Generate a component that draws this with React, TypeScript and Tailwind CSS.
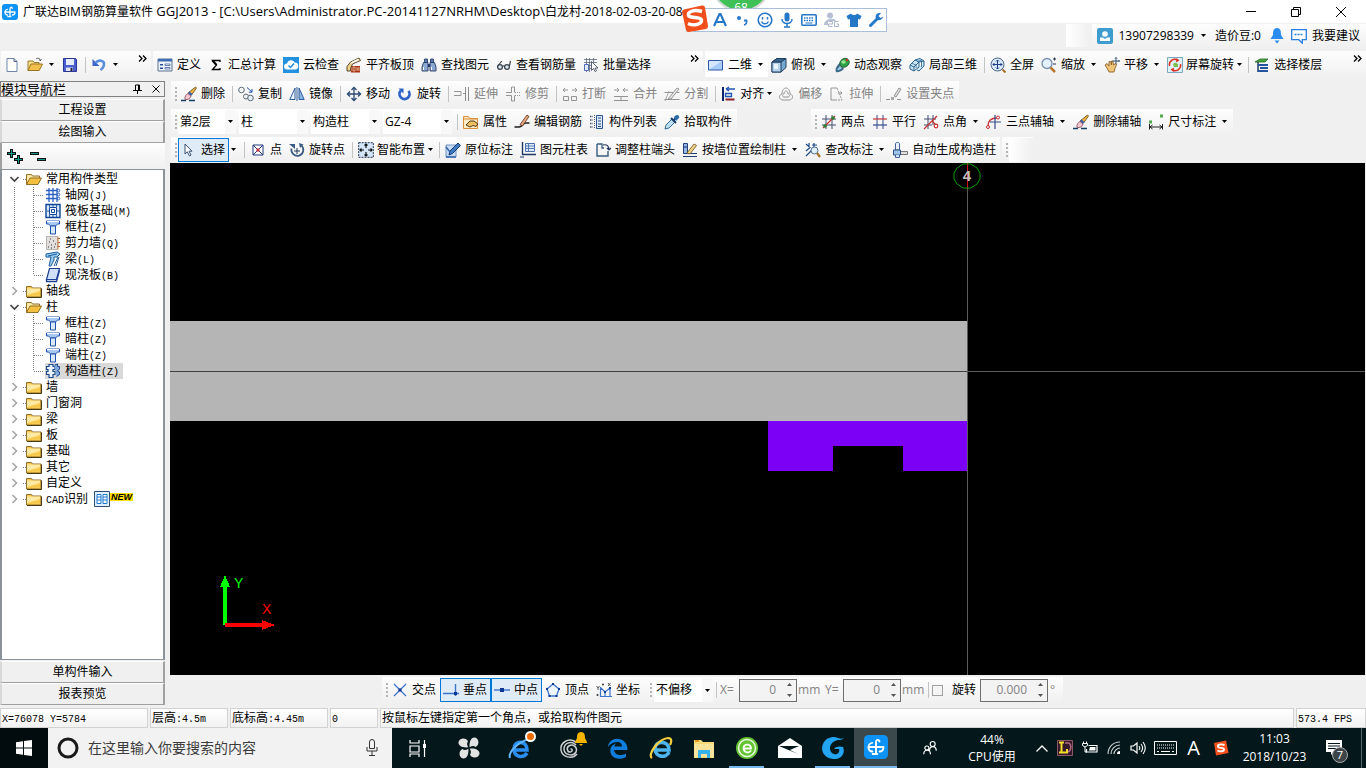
import type { ReactNode } from "react";

/* ---------- primitives ---------- */

function Svg({ children, size = 16 }: { children: ReactNode; size?: number }) {
  return (
    <svg width={size} height={size} viewBox="0 0 16 16" fill="none" className="shrink-0" aria-hidden="true">
      {children}
    </svg>
  );
}

function Caret() {
  return (
    <svg width="5" height="3" viewBox="0 0 5 3" className="shrink-0" aria-hidden="true">
      <path d="M0 0h5L2.500 3z" fill="#000" />
    </svg>
  );
}

function CaretButton({ label }: { label: string }) {
  return (
    <button type="button" aria-label={label} className="flex h-6 w-3 shrink-0 items-center pl-[2px]">
      <Caret />
    </button>
  );
}

function Sep() {
  return <span className="mr-[2px] ml-[3px] h-4 w-px shrink-0 bg-[#c3c3c3]" />;
}

function Grip() {
  return (
    <span className="mr-px flex shrink-0 flex-col gap-[2px] pl-1">
      <i className="h-[2px] w-[2px] bg-[#b4b4b4]" />
      <i className="h-[2px] w-[2px] bg-[#b4b4b4]" />
      <i className="h-[2px] w-[2px] bg-[#b4b4b4]" />
      <i className="h-[2px] w-[2px] bg-[#b4b4b4]" />
    </span>
  );
}

type ToolProps = {
  icon: ReactNode;
  text?: string;
  label?: string;
  disabled?: boolean;
  active?: boolean;
  menu?: boolean;
};

function Tool({ icon, text, label, disabled, active, menu }: ToolProps) {
  const tone = active ? "border-[#0078d7] bg-[#dfebf6]" : "border-transparent";
  return (
    <button
      type="button"
      disabled={disabled}
      aria-label={label}
      className={`flex h-6 shrink-0 items-center border pl-[2px] whitespace-nowrap ${menu ? "gap-[3px] pr-[2px]" : "gap-1 pr-[3px]"} ${tone} ${disabled ? "text-[#838383]" : "text-black"}`}
    >
      <span className={disabled ? "opacity-60 grayscale" : ""}>{icon}</span>
      {text && <span>{text}</span>}
      {menu && <Caret />}
    </button>
  );
}

function Panel({ children, className = "" }: { children?: ReactNode; className?: string }) {
  return (
    <div className={`flex h-full items-center bg-linear-to-b from-[#fdfdfd] to-[#f0f0f0] ${className}`}>{children}</div>
  );
}

function Combo({ label, value, width }: { label: string; value: string; width: string }) {
  return (
    <div className={`relative h-6 shrink-0 bg-white ${width}`}>
      <select aria-label={label} defaultValue={value} className="h-full w-full appearance-none bg-transparent pl-[2px] leading-4">
        <option>{value}</option>
      </select>
      <span className="pointer-events-none absolute inset-y-0 right-0 flex w-[11px] items-center justify-center bg-[#f8f8f8]">
        <Caret />
      </span>
    </div>
  );
}

/* ---------- icons ---------- */

const GldIcon = ({ size = 16 }: { size?: number }) => (
  <Svg size={size}>
    <rect width="16" height="16" rx="3" fill="#0c93f5" />
    <path d="M10.300 4.300C9.700 2.700 8 3 8 4.800v7.700M3 8h10M3 8c0 2 1 3 2.600 3M13 8c0 2-1 3-2.600 3M5.800 12.700h3" stroke="#fff" strokeWidth="1.300" strokeLinecap="round" />
    <path d="M5.600 5.200C3.600 5.600 3 6.800 3 8" stroke="#fff" strokeWidth="1.100" strokeLinecap="round" />
  </Svg>
);

const ic = {
  file: <Svg><path d="M3 1.500h7l3 3v10H3z" fill="#fff" stroke="#7186a5" /><path d="M10 1.500v3h3" stroke="#4a6285" /></Svg>,
  open: <Svg><path d="M1 13.500V4h5l1 1.500h5V7" fill="#f8df8e" stroke="#9b7a2b" /><path d="M1 13.500L4 7h11.500l-3.300 6.500z" fill="#f3c04d" stroke="#9b7420" /><path d="M9 2c2-1.500 4-.8 4.500 1.500m0 0l-1.500-.8m1.500.8l1-1.300" stroke="#333" strokeWidth=".8" /></Svg>,
  save: <Svg><path d="M1.500 1.500h12l1 1v12h-13z" fill="#4c5fd0" stroke="#2a3590" /><path d="M4 2h8v6H4z" fill="#e6ecfb" /><path d="M4 10.500h7V14H4z" fill="#dfe3ee" /><path d="M8.500 11h2v3h-2z" fill="#223" /></Svg>,
  undo: <Svg><path d="M1.500 2v7h7z" fill="#3d66c8" /><path d="M4.500 6c3-4 9-2.500 8.500 1.500-.2 2.300-1.500 4-3.500 5.500" stroke="#5b8fe0" strokeWidth="2.600" /></Svg>,
  define: <Svg><path d="M1 2h14v12H1z" fill="#eef3fb" stroke="#5b7290" /><path d="M1 2h14v2.500H1z" fill="#3e6db5" /><path d="M3 7h3v1.500H3zM3 10.500h3V12H3z" fill="#2c4f9b" /><path d="M8 7h5v1.500H8zM8 10.500h5V12H8z" fill="#fff" stroke="#2c4f9b" strokeWidth=".7" /></Svg>,
  sigma: <Svg><path d="M12 5V3.500H4.500L8.500 8l-4 4.500H12V11" stroke="#000" strokeWidth="1.300" /><path d="M4.500 3.500L8.500 8" stroke="#000" strokeWidth="2" /></Svg>,
  cloud: <Svg><path d="M0 0h16v16H0z" fill="#2391dd" /><path d="M4 12.500a3 3 0 010-6 4 4 0 017.500-1 3.500 3.500 0 01.5 7z" fill="#fff" /><path d="M5.500 8.500l2 2 3.500-4" stroke="#2391dd" strokeWidth="1.500" /></Svg>,
  align: <Svg><path d="M5 9h9v6.500H5z" fill="#a83418" /><path d="M5 11h9M5 13h9M8 9v2m4 0v2M8 13v2" stroke="#efc9a6" strokeWidth=".8" /><path d="M1 9.500l3.500-4.500L13 1l1.500 2.500-8 3.500-2 4.500v2.500H1z" fill="#f0d18b" stroke="#493a20" strokeWidth=".9" /><path d="M5 6l7.500-3.500" stroke="#fff" strokeWidth="1.400" /></Svg>,
  bino: <Svg><path d="M3.500 2h3v4h-3zM9.500 2h3v4h-3z" fill="#5a78a8" stroke="#213a66" strokeWidth=".8" /><path d="M2.500 5.500H7V14H1v-4zM9 5.500h4.500L15 10v4H9z" fill="#8ba8d0" stroke="#213a66" strokeWidth=".9" /><path d="M7 7h2v3H7z" fill="#213a66" /><path d="M2.500 10v3M10.500 10v3" stroke="#fff" /></Svg>,
  glasses: <Svg><circle cx="4" cy="10" r="2.400" stroke="#3d454d" strokeWidth="1.300" fill="#dbe8ef" /><circle cx="11" cy="10" r="2.400" stroke="#3d454d" strokeWidth="1.300" fill="#dbe8ef" /><path d="M6.500 9.500c.8-1 1.500-1 2 0M1.800 9l4-5M13.300 9.500L14.500 4" stroke="#3d454d" strokeWidth="1.200" /></Svg>,
  batch: <Svg><path d="M1 2.500h13M1 5.500h13M1 8.500h7M1 11.500h7M3.500 1v14M6.500 1v14M10.500 1v4" stroke="#5c6778" strokeWidth=".8" /><path d="M1.500 7.500h4v6h-4z" fill="#dfe8fa" stroke="#2c4fa8" strokeWidth=".8" /><path d="M8.500 4.500v9l2-2 1.500 3 1.500-.8-1.500-2.700h3z" fill="#fff" stroke="#4a5568" strokeWidth=".9" /></Svg>,
  plane: <Svg><path d="M.5 3.500h14v9.500H.5z" fill="#a9cbfa" stroke="#2d56a5" /><path d="M1 4h13L1 12.500z" fill="#d4e7ff" /></Svg>,
  cube: <Svg><path d="M1 5l5-3.500h9v9L10 15H1z" fill="#75a7cf" stroke="#203e5e" /><path d="M1 5h9v10H1z" fill="#b2d4ed" stroke="#203e5e" /><path d="M1 5l5-3.500h9L10 5z" fill="#3b648d" stroke="#203e5e" /><path d="M3 7h4v5H3z" fill="#e8f5fd" /></Svg>,
  orbit: <Svg><path d="M2 15c-1.500-3 1-7 4-9l4 6c-2 2-6 4-8 3z" fill="#3f6c8c" /><path d="M3 13l3-4 2 2-3 2z" fill="#a5d0e4" /><ellipse cx="10.500" cy="5.800" rx="5" ry="4.200" transform="rotate(-35 10.500 5.800)" fill="#2fa048" stroke="#1c5c2c" strokeWidth=".8" /><ellipse cx="9.500" cy="5" rx="2.300" ry="1.700" fill="#9be692" /><circle cx="13" cy="3" r="1.200" fill="#c7382a" /></Svg>,
  local3d: <Svg><path d="M1 8l5-5 4 2-5 5zM6 3l5-1.500L15 4l-5 1M1 8v4l4 2v-4M10 5v5l-5 4M15 4v5l-5 5-2-1" fill="#cbe5f6" stroke="#2c6390" /><path d="M3 6l4 2.500M8 4.500L13 3M7 7v4M12.500 5v5" stroke="#2c6390" strokeWidth=".8" /></Svg>,
  full: <Svg><circle cx="7.500" cy="7.500" r="6.500" fill="#dbeafa" stroke="#4c6488" /><path d="M7.500 3v9M3 7.500h9M6 4.500L7.500 3 9 4.500M6 10.500L7.500 12 9 10.500M4.500 6L3 7.500 4.500 9M10.500 6L12 7.500 10.500 9" stroke="#1f3f8c" /><path d="M12.500 12.500l3 3" stroke="#a87228" strokeWidth="2" /></Svg>,
  zoom: <Svg><circle cx="6" cy="6.500" r="5" fill="#e4f0fb" stroke="#7892b0" strokeWidth="1.300" /><path d="M9.500 10.500l4.500 4.500" stroke="#b5782c" strokeWidth="2.500" /><path d="M12 2h3M13.500.500v3M12 7h3" stroke="#203050" /></Svg>,
  pan: <Svg><path d="M1 8l2-1.500L5 9V4.500h1.500L7.500 8V4h1.500l.5 4 2-1.500 1 1-1.500 4-1 3.500H5L3.500 12z" fill="#eec478" stroke="#8a6429" strokeWidth=".9" /><path d="M12 .5v7M8.500 4h7M11 1.500l1-1 1 1M14.500 3l1 1-1 1" stroke="#253f66" strokeWidth=".9" /></Svg>,
  screenrot: <Svg><path d="M.5.500h15v15H.500z" fill="#e1f1f8" stroke="#7ba9c2" /><path d="M2.500 9a5.500 5.500 0 018-6M13.500 7a5.500 5.500 0 01-8 6" stroke="#dd3325" strokeWidth="1.500" /><path d="M9.500 1L12.500 3.500l-3.500 2zM6.500 15L3.500 12.500l3.500-2z" fill="#dd3325" /><path d="M6 7l2-1.500L11 7v3H7z" fill="#7ebd51" /></Svg>,
  floors: <Svg><path d="M1 5l5-3h8l-3 3z" fill="#48a838" stroke="#226b28" strokeWidth=".8" /><path d="M4 5v10" stroke="#203b68" strokeWidth="1.500" /><path d="M4 8h10M6 11h8M4 14h10" stroke="#24549e" strokeWidth="1.800" /></Svg>,
  eraser: <Svg><path d="M0 14.500h5M8 14.500h6" stroke="#163d63" strokeWidth="1.400" /><path d="M14.500 1l1 1-5 7L7 7z" fill="#f1b842" stroke="#5f4116" strokeWidth=".8" /><path d="M8.500 5.500l3 2.500-1.500 2-3-2.500z" fill="#3c62b3" /><path d="M7 7.500l3 2.500c-1 3-3 4-6 3.500-.5-3 1-5 3-6z" fill="#f4c8d0" stroke="#7c4457" strokeWidth=".8" /></Svg>,
  copy: <Svg><circle cx="3.500" cy="4" r="2.800" stroke="#5c6a78" /><circle cx="8" cy="10.500" r="2.500" stroke="#5c6a78" /><circle cx="12.500" cy="12" r="2.800" stroke="#5c6a78" fill="#e6eff8" /><path d="M9 1.500l5 4.500m0-3v3.200h-3.200" stroke="#2453a8" /></Svg>,
  mirror: <Svg><path d="M6 2v11.500H.8z" fill="#e8f1fb" stroke="#2d5d9c" /><path d="M10 2v11.500h5.200z" fill="#8bb5e5" stroke="#2d5d9c" /><path d="M8 1v14" stroke="#2d5d9c" /></Svg>,
  move: <Svg><path d="M8 1.500v13M1.500 8h13" stroke="#2b4a74" strokeWidth="1.300" /><path d="M5.500 4L8 1.500 10.500 4M5.500 12L8 14.500 10.500 12M4 5.500L1.500 8 4 10.500M12 5.500L14.500 8 12 10.500" stroke="#2b4a74" strokeWidth="1.400" /></Svg>,
  rotate: <Svg><path d="M4 4.500a5 5 0 107.500.5" stroke="#3063c8" strokeWidth="2.800" /><path d="M1.500 2.500h5v5z" fill="#3063c8" /></Svg>,
  extend: <Svg><path d="M0 5.500h7v4H0" stroke="#555" /><path d="M9 7.500h2" stroke="#555" /><path d="M11.500 1v14M14.500 1v14" stroke="#444" /></Svg>,
  trim: <Svg><path d="M6.500 1h3v5.500M6.500 1v5.500H1M6.500 15V9.500H1M6.500 15h3V9.500" stroke="#555" /><path d="M10 6.500h6M10 9.500h6" stroke="#555" strokeDasharray="1 1" /></Svg>,
  brk: <Svg><path d="M1.500 14.500v-4h5v4zM9.500 14.500v-4h5v4zM1 4h5M3 2L1 4l2 2M15 4h-5m3-2l2 2-2 2" stroke="#555" /></Svg>,
  merge: <Svg><path d="M1 10.500h14M1 14.500h14M1 4h5M4 2l2 2-2 2M15 4h-5m2-2l-2 2 2 2M8 10v4" stroke="#555" /></Svg>,
  split: <Svg><path d="M.5 6.500h15M.5 13.500h15" stroke="#555" /><path d="M4 13L13 2l2 1-8 10z" fill="#ddd" stroke="#555" /><path d="M1 15l4-10" stroke="#555" strokeWidth=".8" /></Svg>,
  alignl: <Svg><path d="M2 1v14" stroke="#10256d" strokeWidth="2" /><path d="M5 3h9M5 3l3-2M5 3l3 2" stroke="#2154b5" strokeWidth="1.400" /><path d="M4.500 7.500h6v3h-6z" stroke="#2154b5" strokeWidth="1.300" /><path d="M4.500 13.500h9" stroke="#8c1f23" strokeWidth="2" /></Svg>,
  offset: <Svg><path d="M4 8c0-8 8-8 8 0 4 1 3 6-1 6H5C1 14 0 9 4 8z" stroke="#555" /><path d="M6 8c0-4 4-4 4 0 2 .5 2 3 0 3H6C4 11 4 8.500 6 8z" stroke="#555" /></Svg>,
  stretch: <Svg><path d="M8 2H2v12h5" stroke="#555" /><path d="M8 2l5 12H7" stroke="#555" strokeDasharray="2 1" /><path d="M9 7h4m-1.500-1.500L13 7l-1.500 1.500" stroke="#555" /></Svg>,
  clamp: <Svg><path d="M0 13.500h4M11 13.500h4" stroke="#555" /><path d="M5 14v-3h3v3z" fill="#777" /><path d="M8 10l5-8 2 1-5 8z" fill="#ccc" stroke="#555" /></Svg>,
  props: <Svg><path d="M.5 14.500v-12h5l1 2h8v10z" fill="#fdecc6" stroke="#d98f3a" /><path d="M.5 5h14" stroke="#d98f3a" /><path d="M3 11l4-4h4l4 3-2 2.500-3-1-3 1.500z" fill="#f0c060" stroke="#382c18" strokeWidth=".9" /></Svg>,
  editbar: <Svg><path d="M.5 13h4.500c3 0 4-4 6.500-4h4" stroke="#1b1b1b" strokeWidth="1.500" /><path d="M6 10.500L13 1l2 1.500L8.500 12z" fill="#e8a87a" stroke="#5e2f21" strokeWidth=".8" /></Svg>,
  list: <Svg><path d="M1 2.500h3M1 6h3M1 9.500h3M1 13h3" stroke="#44566d" strokeWidth="1.300" strokeDasharray="1.500 1" /><path d="M7.500 1.500h6v13h-6z" fill="#dbe9fa" stroke="#2c528f" /><path d="M9 4h3M9 7h3M9 10h3M9 12.500h3" stroke="#2c528f" /><path d="M5.500 1v14" stroke="#44566d" strokeDasharray="1 1" /></Svg>,
  pick: <Svg><path d="M1 15l1-4 6-6 3 3-6 6z" fill="#bfe3f5" stroke="#2f6a9a" /><path d="M7 4l5 5M10 6l3-4" stroke="#15406d" strokeWidth="2" /><path d="M10 3.500C12-.5 16 1 15 4l-3 3z" fill="#2a6cab" /></Svg>,
  twopt: <Svg><path d="M5 1v14M11 1v14M1 5h14M1 11h14" stroke="#41506e" /><path d="M2 14L14 2" stroke="#c73131" strokeWidth="1.200" /><circle cx="4" cy="12" r="1.800" fill="#2c8130" /><circle cx="12" cy="4" r="1.800" fill="#2c8130" /></Svg>,
  parallel: <Svg><path d="M5 1v14M11 1v14" stroke="#344b8c" /><path d="M1 5h14" stroke="#c73131" strokeWidth="1.200" /><path d="M1 11h14" stroke="#344b8c" strokeWidth="1.200" /></Svg>,
  ptangle: <Svg><path d="M5 1v14M10 1v10M1 5h12M1 11h8" stroke="#41506e" /><path d="M1 15L14 2M9 7l5 5" stroke="#c73131" strokeWidth="1.200" /><circle cx="13" cy="12" r="1.800" fill="#fff" stroke="#c73131" strokeWidth="1.200" /></Svg>,
  threept: <Svg><path d="M2 12c0-5 3-8 9-8" stroke="#c73131" strokeWidth="1.300" /><path d="M9 1v14M4 8h11" stroke="#344b8c" strokeWidth="1.200" /><circle cx="2" cy="13" r="1.500" stroke="#c73131" /><circle cx="12" cy="3.500" r="1.500" fill="#fff" stroke="#c73131" /></Svg>,
  dim: <Svg><path d="M1.500 10v5.500M14.500 10v5.500M2 13h12M4.500 11L2 13l2.500 2M11.500 11l2.500 2-2.500 2" stroke="#222" /><path d="M1 6.500h3v3H1zM12 .500h3v3h-3z" fill="#4eac4c" /></Svg>,
  pointer: <Svg><path d="M4 2v10l2.300-2.200L8.500 14l1.500-1-2-3.800h3z" fill="#fff" stroke="#3a5173" /></Svg>,
  point: <Svg><path d="M3 3h10v10H3z" fill="#fff" stroke="#233a80" /><path d="M3 3l10 10M13 3L3 13" stroke="#233a80" /><path d="M6.500 6.500h3v3h-3z" fill="#c82f38" /></Svg>,
  rotpt: <Svg><path d="M2.500 6.500a6 6 0 1010-3" stroke="#3a5b82" strokeWidth="1.700" /><path d="M0 2h6v5z" fill="#3a5b82" /><path d="M8 6v6M5 9h6" stroke="#1d3352" /><path d="M10 1l4.500 1.500L11 6z" fill="#3a5b82" /></Svg>,
  smart: <Svg><path d="M.7.700h14.600v14.600H.700z" fill="#d5e6f9" stroke="#27364c" strokeDasharray="2 1" /><path d="M8 1.500v4.500M8 10v4.500M1.500 8H6M10 8h4.500M6.500 3.500L8 2l1.500 1.500M6.500 12.500L8 14l1.500-1.500M3.500 6.500L2 8l1.500 1.500M12.500 6.500L14 8l-1.500 1.500" stroke="#111" strokeWidth="1.200" /></Svg>,
  annotate: <Svg><path d="M1 3h10v12H1z" fill="#c7daf3" stroke="#7193c4" /><path d="M4 13l1-4 8-8 2.500 2.500-8 8z" fill="#3f7bc2" stroke="#173b72" /><path d="M1 15h10M1 5l4 5" stroke="#3162a8" strokeWidth="1.300" /></Svg>,
  coltable: <Svg><path d="M2.500 0v12.500H16" stroke="#1f3763" strokeWidth="1.400" /><path d="M5.500 1.500h9v8h-9z" fill="#dfeafb" stroke="#4a6fb0" /><path d="M5.500 4h9M5.500 6.500h9M8.500 1.500v8" stroke="#4a6fb0" strokeWidth=".9" /><path d="M0 15h4" stroke="#1f3763" /></Svg>,
  colend: <Svg><path d="M2 2v12h11V9" stroke="#3a5b82" strokeWidth="1.400" /><path d="M2 2h5v4h2" stroke="#3a5b82" strokeWidth="1.300" /><path d="M8 3c4-1 6 1 6 5m0 0l-2-2m2 2l2-2" stroke="#23355d" strokeWidth="1.200" /></Svg>,
  wallcol: <Svg><path d="M1.500 1.500h4v10h-4z" fill="#97b7e8" stroke="#203d78" /><path d="M1 14.500h14M6 11.500h9M2 5h3" stroke="#203d78" strokeWidth="1.200" /><path d="M5 11L12 2l2.500 1.500L8 12z" fill="#f0d688" stroke="#6c4b17" strokeWidth=".8" /></Svg>,
  check: <Svg><path d="M1 2l4 3.500L1 9M1 14l6-6M4 1v4M9 1v4M7 3h5" stroke="#1e4b8a" strokeWidth="1.200" /><circle cx="9.500" cy="8.500" r="3.500" fill="#dff0fb" stroke="#516f92" /><path d="M12 11l3 4" stroke="#a7732b" strokeWidth="2.200" /></Svg>,
  autocol: <Svg><path d="M3.500 1.500c0-1.500 4-1.500 4 0V8h-4z" fill="#eaf3fd" stroke="#3f6499" /><path d="M8 9.500h7.500v3H8z" fill="#ddd" stroke="#777" /><path d="M1.500 8h7v5h-7z" fill="#9fc4ec" stroke="#2d4f87" /><path d="M3.500 13v2.500h4V13" fill="#d5e6f9" stroke="#3f6499" /></Svg>,
  cross: <Svg><path d="M2 2l12 12M14 2L2 14" stroke="#3c74cc" strokeWidth="1.300" /><path d="M6.500 6.500h3v3h-3z" fill="#0f3794" /></Svg>,
  perp: <Svg><path d="M0 11.500h16M12.500 2v12" stroke="#3c74cc" strokeWidth="1.400" /><path d="M11 10h3v3h-3z" fill="#0f3794" /></Svg>,
  mid: <Svg><path d="M0 8h16" stroke="#3c74cc" strokeWidth="1.400" /><path d="M6 6h4v4H6z" fill="#0f3794" /></Svg>,
  vertex: <Svg><path d="M8 2l6 5-2.500 7h-7L2 7z" fill="#eef5fd" stroke="#3c74cc" strokeWidth="1.300" /><path d="M7 1h2v2H7zM1 6h2v2H1zM13 6h2v2h-2zM3.500 13h2v2h-2zM10.500 13h2v2h-2z" fill="#0f3794" /></Svg>,
  coord: <Svg><path d="M4.500 5v10M4 14.500h12M5 6l4 4 5-4M9 10v4M14 6v8" stroke="#3c74cc" strokeWidth="1.200" /><path d="M.5 4l1.500 2 1.500-2M2 6v2M12 1l2.500 3M14.500 1L12 4" stroke="#333" strokeWidth=".8" /><circle cx="7" cy="2.500" r="1" fill="#333" /><circle cx="1.500" cy="13" r="1" fill="#333" /><path d="M8 9h2v2H8zM13 5h2v2h-2z" fill="#0f3794" /></Svg>,
};

/* ---------- tree icons ---------- */

const ti = {
  folder: <Svg><path d="M.5 3.500h5l1 1.500h8.500v9H.500z" fill="#f7c94f" stroke="#8f6e28" /><path d="M1 5.500h13V8L1 12z" fill="#fde9a4" /><path d="M15.500 5.500v9H1" stroke="#4b3a17" /></Svg>,
  folderOpen: <Svg><path d="M.5 13.500v-10h5l1 1.500h7v3" fill="#fdeaa6" stroke="#8f6e28" /><path d="M.5 13.500L4 7h11.500L12 13.500z" fill="#f5bf40" stroke="#8f6e28" /></Svg>,
  grid: <Svg><path d="M4 1v14M8 1v14M12 1v14M1 3.500h11M1 7.500h11M1 11.500h11" stroke="#2c62c4" strokeWidth="1.300" /><circle cx="13.500" cy="3.500" r="1.300" stroke="#2c62c4" /><circle cx="13.500" cy="7.500" r="1.300" stroke="#2c62c4" /><circle cx="13.500" cy="11.500" r="1.300" stroke="#2c62c4" /></Svg>,
  raft: <Svg><path d="M1 1.500h14v13H1z" fill="#d9e9fb" stroke="#0f4596" strokeWidth="1.400" /><path d="M4.500 4.500h7v7h-7z" fill="#fff" stroke="#0f4596" /><path d="M6.500 6.500h3v3h-3z" stroke="#0f4596" /><path d="M8 2v2M8 12v2M2 8h2M12 8h2M4.500 2v2M11.500 2v2M4.500 12v2M11.500 12v2" stroke="#0f4596" strokeWidth=".8" /></Svg>,
  column: <Svg><path d="M1.500 2h13v3h-2l-2 2h-5l-2-2h-2z" fill="#a9c8f5" stroke="#1d52ae" /><path d="M5.500 7h5v8h-5z" fill="#dce9fb" stroke="#1d52ae" /><path d="M2 2.500h12" stroke="#fff" /></Svg>,
  shear: <Svg><path d="M1.500 1.500h11v13h-11z" fill="#e2dedb" stroke="#b9b4b0" /><path d="M3 12h1M6 10h1M4 7h1M9 12h1M8 6h1M6 13h1M10 9h1M5 4h1" stroke="#333" /><path d="M13 3h2v1h-2zM13 7h2v1h-2zM13 11h2v1h-2z" fill="#bb5a24" /><path d="M13 1.500v13" stroke="#cf7a3c" /></Svg>,
  beam: <Svg><path d="M1 3l11-2 3 2-3 3H9v3l-3 6H4L6 6H1z" fill="#9bcdf0" stroke="#1c5a9c" /><path d="M3 5l9-2M9 15l4-9M11 15l3-9" stroke="#1c5a9c" /></Svg>,
  slab: <Svg><path d="M4.500 1.500h10l-3 11h-10z" fill="#cfe0fa" stroke="#1d3f94" strokeWidth="1.200" /><path d="M1.500 12.500v2h10l3-11" stroke="#1d3f94" strokeWidth="1.300" /></Svg>,
  struct: <Svg><path d="M4 1.500h4v2h2v3H8v2h2v3H8v3H4v-3H1.500v-3H3v-2H1.500v-3H4z" fill="#e9f2fd" stroke="#1d4b8e" strokeWidth="1.200" /><path d="M9.500 2l3-1v2.500h2V6l-2 2 2 1v2.500l-3 2" stroke="#1d4b8e" fill="#7da9de" /></Svg>,
  cad: <Svg><path d="M.5.500h15v15H.500z" fill="#dff0fc" stroke="#2e4e76" /><path d="M3 3.500h4v9H3zM9 3.500h4v9H9z" fill="#fff" stroke="#1d7bd0" /><path d="M3 6h4M3 9h4M9 6h4M9 9h4" stroke="#1d7bd0" /></Svg>,
};

/* ---------- module tree ---------- */

type Leaf = { name: string; key: string; icon: ReactNode; selected?: boolean };
type Group = { name: string; latin?: string; children?: Leaf[]; isNew?: boolean };

const groups: Group[] = [
  {
    name: "常用构件类型",
    children: [
      { name: "轴网", key: "(J)", icon: ti.grid },
      { name: "筏板基础", key: "(M)", icon: ti.raft },
      { name: "框柱", key: "(Z)", icon: ti.column },
      { name: "剪力墙", key: "(Q)", icon: ti.shear },
      { name: "梁", key: "(L)", icon: ti.beam },
      { name: "现浇板", key: "(B)", icon: ti.slab },
    ],
  },
  { name: "轴线" },
  {
    name: "柱",
    children: [
      { name: "框柱", key: "(Z)", icon: ti.column },
      { name: "暗柱", key: "(Z)", icon: ti.column },
      { name: "端柱", key: "(Z)", icon: ti.column },
      { name: "构造柱", key: "(Z)", icon: ti.struct, selected: true },
    ],
  },
  { name: "墙" },
  { name: "门窗洞" },
  { name: "梁" },
  { name: "板" },
  { name: "基础" },
  { name: "其它" },
  { name: "自定义" },
  { name: "识别", latin: "CAD", isNew: true },
];

function Mono({ children }: { children: ReactNode }) {
  return (
    <span className="font-['Liberation_Mono','Noto_Sans_CJK_SC',monospace] text-[10px] leading-none">{children}</span>
  );
}

function Tree() {
  return (
    <ul className="pt-px">
      {groups.map((g) => (
        <li key={g.name + (g.latin ?? "")}>
          <button type="button" className="flex h-4 items-center">
            <svg width="24" height="16" viewBox="0 0 24 16" fill="none" aria-hidden="true" className="shrink-0">
              {g.children ? (
                <path d="M8.500 6l4 4 4-4" stroke="#404040" strokeWidth="1.600" />
              ) : (
                <path d="M10.500 4l4 4-4 4" stroke="#a6a6a6" strokeWidth="1.600" />
              )}
              <path d="M21 8.500h3" stroke="#808080" strokeDasharray="1 1" />
            </svg>
            {g.children ? ti.folderOpen : ti.folder}
            <span className="ml-1 leading-4">
              {g.latin && <Mono>{g.latin}</Mono>}
              {g.name}
            </span>
            {g.isNew && (
              <>
                <span className="ml-[6px] flex">{ti.cad}</span>
                <span className="mb-[5px] bg-[#ffe000] px-px font-['Liberation_Sans',sans-serif] text-[9px] leading-[8px] font-bold italic">
                  NEW
                </span>
              </>
            )}
          </button>
          {g.children && (
            <ul>
              {g.children.map((c, i) => (
                <li key={c.name}>
                  <button type="button" className="flex h-4 items-center">
                    <svg width="43" height="16" viewBox="0 0 43 16" fill="none" aria-hidden="true" className="shrink-0">
                      <path
                        d={`M12.500 0v16M31.500 0v${i === g.children!.length - 1 ? 8 : 16}M32 8.500h10`}
                        stroke="#808080"
                        strokeDasharray="1 1"
                      />
                    </svg>
                    <span className={`flex h-4 items-center pr-1 ${c.selected ? "bg-[#d9d9d9]" : ""}`}>
                      {c.icon}
                      <span className="ml-1 leading-4">
                        {c.name}
                        <Mono>{c.key}</Mono>
                      </span>
                    </span>
                  </button>
                </li>
              ))}
            </ul>
          )}
        </li>
      ))}
    </ul>
  );
}

function NavButton({ children }: { children: ReactNode }) {
  return (
    <button
      type="button"
      className="h-[22px] shrink-0 border-t border-r-2 border-b border-l-2 border-t-white border-r-[#a0a0a0] border-b-[#a0a0a0] border-l-[#d8d8d8] bg-[#f0f0f0] leading-4"
    >
      {children}
    </button>
  );
}

function Sidebar() {
  return (
    <aside className="flex w-[165px] shrink-0 flex-col pt-[3px] pb-[3px]">
      <header className="mb-[2px] flex h-4 shrink-0 items-center border border-[#808080]">
        <h2 className="flex-1 text-[13px] leading-[14px]">模块导航栏</h2>
        <button type="button" aria-label="固定" className="mr-[10px]">
          <svg width="9" height="10" viewBox="0 0 9 10" fill="none" aria-hidden="true">
            <path d="M2.500 1h4v5M2.500 1v5M0 6.500h9M4.500 6.500V10M5.500 1v5" stroke="#000" />
          </svg>
        </button>
        <button type="button" aria-label="关闭" className="mr-1">
          <svg width="8" height="8" viewBox="0 0 8 8" fill="none" aria-hidden="true">
            <path d="M.5.500l7 7M7.500.500l-7 7" stroke="#000" />
          </svg>
        </button>
      </header>
      <NavButton>工程设置</NavButton>
      <NavButton>绘图输入</NavButton>
      <div className="flex h-[26px] shrink-0 items-center gap-[7px] border-l-2 border-[#a0a0a0] bg-linear-to-b from-[#fdfdfd] to-[#f0f0f0] pl-[5px]">
        <button type="button" aria-label="全部展开">
          <svg width="16" height="15" viewBox="0 0 16 15" fill="none" aria-hidden="true">
            <path d="M4.500 0v9M0 4.500h9M11.500 6v9M7 10.500h9" stroke="#111" strokeWidth="3" />
            <path d="M4.500 1v7M1 4.500h7M11.500 7v7M8 10.500h7" stroke="#11998b" />
          </svg>
        </button>
        <button type="button" aria-label="全部折叠">
          <svg width="16" height="15" viewBox="0 0 16 15" fill="none" aria-hidden="true">
            <path d="M0 4.500h9M7 10.500h9" stroke="#111" strokeWidth="3" />
            <path d="M1 4.500h7M8 10.500h7" stroke="#11998b" />
          </svg>
        </button>
      </div>
      <nav className="mb-px min-h-0 flex-1 overflow-hidden border-2 border-t border-b border-[#8c9299] bg-white">
        <Tree />
      </nav>
      <NavButton>单构件输入</NavButton>
      <NavButton>报表预览</NavButton>
    </aside>
  );
}

/* ---------- toolbars ---------- */

function Overflow() {
  return (
    <button type="button" aria-label="更多" className="mt-1 mr-1 ml-auto self-start">
      <svg width="9" height="7" viewBox="0 0 9 7" fill="none" className="block" aria-hidden="true">
        <path d="M1 .500l3 3-3 3M5 .500l3 3-3 3" stroke="#000" strokeWidth="1.300" />
      </svg>
    </button>
  );
}

function MainToolbar() {
  return (
    <div className="flex h-[27px] shrink-0 gap-[2px] pl-px">
      <Panel className="w-[150px] shrink-0">
        <Tool icon={ic.file} label="新建" />
        <Tool icon={ic.open} label="打开" />
        <CaretButton label="打开选项" />
        <Tool icon={ic.save} label="保存" />
        <Sep />
        <Tool icon={ic.undo} label="撤销" />
        <CaretButton label="撤销选项" />
        <Overflow />
      </Panel>
      <Panel className="w-[550px] shrink-0 pl-px">
        <Tool icon={ic.define} text="定义" />
        <Tool icon={ic.sigma} text="汇总计算" />
        <Tool icon={ic.cloud} text="云检查" />
        <Tool icon={ic.align} text="平齐板顶" />
        <Tool icon={ic.bino} text="查找图元" />
        <Tool icon={ic.glasses} text="查看钢筋量" />
        <Tool icon={ic.batch} text="批量选择" />
        <Overflow />
      </Panel>
      <Panel className="min-w-0 flex-1">
        <div className="flex bg-white">
          <Tool icon={ic.plane} text="二维" />
          <CaretButton label="二维选项" />
        </div>
        <Tool icon={ic.cube} text="俯视" />
        <CaretButton label="俯视选项" />
        <Tool icon={ic.orbit} text="动态观察" />
        <Tool icon={ic.local3d} text="局部三维" />
        <Sep />
        <Tool icon={ic.full} text="全屏" />
        <Tool icon={ic.zoom} text="缩放" />
        <CaretButton label="缩放选项" />
        <Tool icon={ic.pan} text="平移" />
        <CaretButton label="平移选项" />
        <Tool icon={ic.screenrot} text="屏幕旋转" menu />
        <Sep />
        <Tool icon={ic.floors} text="选择楼层" />
        <Overflow />
      </Panel>
    </div>
  );
}

function EditToolbars() {
  return (
    <div className="flex shrink-0 flex-col gap-[3px] pt-[3px] pb-px pl-px">
      <div className="flex h-[25px]">
        <Panel className="pr-px">
          <Grip />
          <Tool icon={ic.eraser} text="删除" />
          <Sep />
          <Tool icon={ic.copy} text="复制" />
          <Tool icon={ic.mirror} text="镜像" />
          <Sep />
          <Tool icon={ic.move} text="移动" />
          <Tool icon={ic.rotate} text="旋转" />
          <Sep />
          <Tool icon={ic.extend} text="延伸" disabled />
          <Tool icon={ic.trim} text="修剪" disabled />
          <Sep />
          <Tool icon={ic.brk} text="打断" disabled />
          <Tool icon={ic.merge} text="合并" disabled />
          <Tool icon={ic.split} text="分割" disabled />
          <Sep />
          <Tool icon={ic.alignl} text="对齐" menu />
          <Tool icon={ic.offset} text="偏移" disabled />
          <Tool icon={ic.stretch} text="拉伸" disabled />
          <Sep />
          <Tool icon={ic.clamp} text="设置夹点" disabled />
        </Panel>
      </div>
      <div className="flex h-[25px]">
        <Panel className="pr-px">
          <Grip />
          <div className="flex gap-[3px] pr-[2px]">
            <Combo label="楼层" value="第2层" width="w-[58px]" />
            <Combo label="构件大类" value="柱" width="w-[69px]" />
            <Combo label="构件类型" value="构造柱" width="w-[69px]" />
            <Combo label="构件名称" value="GZ-4" width="w-[69px]" />
          </div>
          <Sep />
          <Tool icon={ic.props} text="属性" />
          <Tool icon={ic.editbar} text="编辑钢筋" />
          <Tool icon={ic.list} text="构件列表" />
          <Tool icon={ic.pick} text="拾取构件" />
        </Panel>
        <Panel className="ml-[74px] pr-px">
          <Grip />
          <Tool icon={ic.twopt} text="两点" />
          <Tool icon={ic.parallel} text="平行" />
          <Tool icon={ic.ptangle} text="点角" />
          <CaretButton label="点角选项" />
          <Tool icon={ic.threept} text="三点辅轴" />
          <CaretButton label="三点辅轴选项" />
          <Tool icon={ic.eraser} text="删除辅轴" />
          <Tool icon={ic.dim} text="尺寸标注" />
          <CaretButton label="尺寸标注选项" />
        </Panel>
      </div>
      <div className="flex h-[25px] gap-[2px]">
        <Panel>
          <Grip />
          <Tool icon={ic.pointer} text="选择" active />
          <CaretButton label="选择选项" />
          <Sep />
          <Tool icon={ic.point} text="点" />
          <Tool icon={ic.rotpt} text="旋转点" />
          <Sep />
          <Tool icon={ic.smart} text="智能布置" menu />
          <Sep />
          <Tool icon={ic.annotate} text="原位标注" />
          <Tool icon={ic.coltable} text="图元柱表" />
          <Tool icon={ic.colend} text="调整柱端头" />
          <Tool icon={ic.wallcol} text="按墙位置绘制柱" />
          <CaretButton label="绘制柱选项" />
          <Tool icon={ic.check} text="查改标注" />
          <CaretButton label="查改标注选项" />
          <Tool icon={ic.autocol} text="自动生成构造柱" />
        </Panel>
        <Panel>
          <Grip />
          <span className="h-6 w-6 bg-linear-to-r from-white to-[#f0f0f0]" />
        </Panel>
      </div>
    </div>
  );
}

/* ---------- drawing area ---------- */

function Canvas() {
  return (
    <div className="min-h-0 flex-1 overflow-hidden bg-black">
      <svg className="h-full w-full" viewBox="0 0 1195 512" preserveAspectRatio="xMinYMin meet" shapeRendering="crispEdges" role="img" aria-label="绘图区">
        <path d="M0 158h797v100H0z" fill="#b5b5b5" />
        <path d="M598 258h199v50h-64v-25h-70v25h-65z" fill="#7b00f5" />
        <path d="M0 208.500h797" stroke="#404040" />
        <path d="M797 208.500h398" stroke="#5a5a5a" />
        <path d="M797.500 25v487" stroke="#5a5a5a" />
        <path d="M797.500 0v25" stroke="#d01010" />
        <path d="M793 1h8l6 4 3 5v6l-3 5-6 4h-8l-6-4-3-5v-6l3-5z" fill="none" stroke="#00a000" shapeRendering="auto" />
        <text x="797" y="18" textAnchor="middle" fontFamily="Liberation Sans, sans-serif" fontSize="15" fontWeight="bold" fill="#c0c0c0">4</text>
        <path d="M53 462h4v-43h-4z" fill="#00ff00" />
        <path d="M55 412l5 12H50z" fill="#00ff00" />
        <path d="M55 460h38v4H55z" fill="#ff0000" />
        <path d="M92 457l13 5-13 5z" fill="#ff0000" />
        <text x="64" y="425" fontFamily="Liberation Sans, sans-serif" fontSize="14" fill="#00ff00">Y</text>
        <text x="92" y="451" fontFamily="Liberation Sans, sans-serif" fontSize="14" fill="#ff0000">X</text>
      </svg>
    </div>
  );
}

/* ---------- snap bar ---------- */

function NumberField({ id, value, width }: { id: string; value: string; width: string }) {
  return (
    <span className={`flex h-[23px] shrink-0 items-center border border-[#6e6e6e] bg-[#f3f3f3] ${width}`}>
      <input id={id} type="text" defaultValue={value} className="min-w-0 flex-1 bg-transparent pr-[6px] text-right leading-4 text-[#838383]" />
      <span className="flex w-[14px] flex-col items-center gap-2">
        <button type="button" aria-label="增加">
          <svg width="5" height="3" viewBox="0 0 5 3" className="block" aria-hidden="true"><path d="M0 3h5L2.500 0z" fill="#555" /></svg>
        </button>
        <button type="button" aria-label="减少">
          <svg width="5" height="3" viewBox="0 0 5 3" className="block" aria-hidden="true"><path d="M0 0h5L2.500 3z" fill="#555" /></svg>
        </button>
      </span>
    </span>
  );
}

function SnapBar() {
  return (
    <div className="flex h-[33px] shrink-0 pt-[2px] pb-[5px] pl-[212px]">
      <Panel className="pr-[2px]">
        <Grip />
        <Tool icon={ic.cross} text="交点" />
        <Tool icon={ic.perp} text="垂点" active />
        <Tool icon={ic.mid} text="中点" active />
        <Tool icon={ic.vertex} text="顶点" />
        <Tool icon={ic.coord} text="坐标" />
      </Panel>
      <Panel className="pr-2 text-[#838383]">
        <Grip />
        <div className="ml-px flex text-black">
          <Combo label="偏移方式" value="不偏移" width="w-[59px]" />
        </div>
        <Sep />
        <label htmlFor="off-x" className="w-5 pl-px">X=</label>
        <NumberField id="off-x" value="0" width="w-[58px]" />
        <span className="w-7 pl-px">mm</span>
        <label htmlFor="off-y" className="w-[18px]">Y=</label>
        <NumberField id="off-y" value="0" width="w-[58px]" />
        <span className="w-6 pl-px">mm</span>
        <Sep />
        <input id="rot" type="checkbox" className="ml-px h-[11px] w-[11px] shrink-0 appearance-none border border-[#a0a0a0] bg-[#f5f5f5]" />
        <label htmlFor="rot" className="mr-1 ml-[9px] text-black">旋转</label>
        <NumberField id="rot-angle" value="0.000" width="w-[68px]" />
        <label htmlFor="rot-angle" className="ml-[2px]">°</label>
      </Panel>
    </div>
  );
}

/* ---------- status bar ---------- */

function StatusCell({ children, className }: { children: ReactNode; className: string }) {
  return (
    <div className={`h-full overflow-hidden border border-[#d2d2d2] bg-linear-to-b from-white to-[#f2f2f2] pl-px leading-[18px] whitespace-pre ${className}`}>
      {children}
    </div>
  );
}

function StatusBar() {
  return (
    <footer className="flex h-5 shrink-0 gap-[2px] bg-[#f0f0f0]">
      <StatusCell className="w-[148px]"><Mono>X=76078 Y=5784</Mono></StatusCell>
      <StatusCell className="w-[78px]">层高<Mono>:4.5m</Mono></StatusCell>
      <StatusCell className="w-[98px]">底标高<Mono>:4.45m</Mono></StatusCell>
      <StatusCell className="w-[48px]"><Mono>0</Mono></StatusCell>
      <StatusCell className="min-w-0 flex-1">按鼠标左键指定第一个角点，或拾取构件图元</StatusCell>
      <StatusCell className="w-[70px]"><Mono>573.4 FPS</Mono></StatusCell>
    </footer>
  );
}

/* ---------- taskbar ---------- */

function App24({ children }: { children: ReactNode }) {
  return (
    <svg width="24" height="24" viewBox="0 0 24 24" fill="none" aria-hidden="true">
      {children}
    </svg>
  );
}

function TaskButton({ label, children, wide, state }: { label: string; children: ReactNode; wide?: boolean; state?: "open" | "active" }) {
  return (
    <button
      type="button"
      aria-label={label}
      className={`relative flex h-10 shrink-0 items-center justify-center ${wide ? "w-[51px]" : "w-[43px]"} ${
        state === "active" ? "border-b-2 border-[#76b9ed] bg-[#3b484c]" : ""
      }`}
    >
      {children}
      {state === "open" && <span className="absolute inset-x-1 bottom-0 h-[2px] bg-[#76b9ed]" />}
    </button>
  );
}

function Taskbar() {
  return (
    <div className="flex h-10 shrink-0 items-center bg-[#04171b] text-white">
      <button type="button" aria-label="开始" className="flex h-10 w-12 shrink-0 items-center justify-center bg-black/50">
        <svg width="16" height="16" viewBox="0 0 16 16" fill="#fff" aria-hidden="true">
          <path d="M0 2.200L7 1.200v6.300H0zM8 1l8-1v7.500H8zM0 8.500h7v6.300l-7-1zM8 8.500h8V16l-8-1z" />
        </svg>
      </button>
      <label className="flex h-10 w-[344px] shrink-0 items-center bg-[#f2f2f2] pr-3 pl-[9px]">
        <svg width="22" height="22" viewBox="0 0 22 22" fill="none" aria-hidden="true">
          <circle cx="11" cy="11" r="9" stroke="#1a1a1a" strokeWidth="3" />
        </svg>
        <input
          type="text"
          aria-label="搜索"
          placeholder="在这里输入你要搜索的内容"
          className="ml-[9px] min-w-0 flex-1 bg-transparent text-[14px] leading-5 text-black placeholder:text-[#3c3c3c]"
        />
        <svg width="16" height="18" viewBox="0 0 16 18" fill="none" stroke="#333" aria-hidden="true">
          <path d="M5.500 3a2.500 2.500 0 015 0v6.500h-5zM3 8v4h10V8M8 12v4.500M5 16.500h6" />
        </svg>
      </label>

      <TaskButton label="任务视图" wide>
        <App24><path d="M4 3.500v3h9v-3M4 9.500h9v6H4zM4 20.500v-3h9v3" stroke="#fff" strokeWidth="1.200" transform="translate(0 .500)" /><path d="M18.500 4v17" stroke="#fff" strokeWidth="1.200" /><path d="M17 8h3v4h-3z" fill="#fff" /></App24>
      </TaskButton>
      <TaskButton label="风车" wide>
        <App24>
          <g fill="#e3e3e3">
            <path d="M11.300 11.300C6 12 1 10 1.500 6 3 1 10 2 11 5.500c-1.500 1.500-1 4 .3 5.800z" />
            <path d="M12.700 11.300C12 6 14 1 18 1.500c5 1.500 4 8.500.5 9.500-1.500-1.500-4-1-5.800.3z" />
            <path d="M12.700 12.700c5.300-.7 10.300 1.300 9.800 5.300-1.500 5-8.500 4-9.500.5 1.500-1.500 1-4-.3-5.800z" />
            <path d="M11.300 12.700c.7 5.300-1.300 10.300-5.300 9.800-5-1.500-4-8.500-.5-9.500 1.500 1.500 4 1 5.800-.3z" />
          </g>
        </App24>
      </TaskButton>
      <TaskButton label="浏览器" wide>
        <span className="relative flex">
          <App24>
            <path d="M19 17c-4 6-13 4-13-4 0-9 13-9 13 1H7" stroke="#2a8df0" strokeWidth="3.600" />
            <path d="M2 22c-2-5 6-15 19-19" stroke="#63b7ff" strokeWidth="2" />
          </App24>
          <span className="absolute -top-[5px] -right-1 h-[11px] w-[11px] rounded-full border-2 border-white bg-[#f06a00]" />
        </span>
      </TaskButton>
      <TaskButton label="消息" wide>
        <span className="relative flex">
          <App24>
            <path d="M17 6C9 1 1 7 2 14c1 7 11 10 16 4" stroke="#d0d0d0" strokeWidth="1.500" />
            <path d="M17 9c-4-5-12-2-12 4 0 6 9 8 12 3 2-5-3-8-6.500-6.500-4 2-2 7 1 6.500 2.500-.5 2-3.500 0-3" stroke="#d0d0d0" strokeWidth="1.500" />
          </App24>
          <svg width="14" height="14" viewBox="0 0 14 14" className="absolute -top-1 -right-[5px]" aria-hidden="true">
            <path d="M7 0c-4 0-4 4-4 6L1 10v1h12v-1l-2-4c0-2 0-6-4-6zM5 12h4l-2 2z" fill="#f4b400" />
          </svg>
        </span>
      </TaskButton>
      <TaskButton label="Edge">
        <App24><path d="M2 11C3-1 22 0 21.500 14H8c1 6 8 6 12 3.500V21C13 25 3 22 4.500 13 5 10 8 8 10 7.500 8.500 9 8.500 10 8.500 10.500H16C16 4 6 5 2 11z" fill="#0f7ddb" /></App24>
      </TaskButton>
      <TaskButton label="Internet Explorer">
        <App24>
          <path d="M20 16c-3 7-14 5-14-3 0-9 14-9 14 1H7" stroke="#4db4ec" strokeWidth="3.600" />
          <path d="M3 22C-2 19 9 3 19 2c5 0 3 5 2 7" stroke="#f7cf3d" strokeWidth="2.200" />
        </App24>
      </TaskButton>
      <TaskButton label="文件资源管理器">
        <App24><path d="M2 4h7l2 2h11v16H2z" fill="#f7d978" /><path d="M2 8h20v13H2z" fill="#fde49b" /><path d="M6 14h12v8h-3v-4H9v4H6z" fill="#36b2ea" /><path d="M3 5h4" stroke="#e89a25" strokeWidth="2" /></App24>
      </TaskButton>
      <TaskButton label="360浏览器" state="open">
        <App24>
          <circle cx="12" cy="12" r="11" fill="#63c332" />
          <circle cx="12" cy="12" r="8.500" stroke="#eaf8df" strokeWidth="1.500" />
          <path d="M16 14.500c-2.500 3.500-7.500 2-7.500-2.500 0-4.500 7.500-4.500 7.500.5H9" stroke="#fff" strokeWidth="1.800" />
        </App24>
      </TaskButton>
      <TaskButton label="邮件">
        <App24><path d="M0 10l12-8 12 8v12H0z" fill="#fff" /><path d="M1 10h20l-9 4 8 4z" fill="#04171b" /></App24>
      </TaskButton>
      <TaskButton label="广联达" state="open">
        <App24><path d="M23 2c-3 3-5 1-9 3-6 2-7 11-1 13 4 1 6-2 5-5h-5c2-3 6-3 9-2 3 7-3 13-10 12C3 22-1 14 2 8 5 1 13 0 17 2c2 1 4 1 6 0z" fill="#22a4f2" /></App24>
      </TaskButton>
      <TaskButton label="GGJ2013" state="active">
        <GldIcon size={24} />
      </TaskButton>

      <div className="ml-auto flex h-10 items-center">
        <button type="button" aria-label="人脉" className="flex w-11 justify-center">
          <svg width="16" height="16" viewBox="0 0 18 18" fill="none" stroke="#fff" strokeWidth="1.300" aria-hidden="true">
            <circle cx="12" cy="4.500" r="2.800" /><circle cx="5.500" cy="9" r="2.300" />
            <path d="M8.500 12c0-6 7.500-6 7.500 0M2 16c0-6 7.500-6 7.500 0" />
          </svg>
        </button>
        <div className="w-20 text-center text-[12px] leading-[17px]">
          <div>44%</div>
          <div>CPU使用</div>
        </div>
        <button type="button" aria-label="显示隐藏的图标" className="flex w-5 justify-center">
          <svg width="12" height="7" viewBox="0 0 12 7" fill="none" aria-hidden="true"><path d="M.5 6.500L6 1l5.500 5.500" stroke="#fff" strokeWidth="1.300" /></svg>
        </button>
        <span className="flex w-[26px] justify-center">
          <Svg><path d="M.5.500h15v15H.500z" fill="#35182b" stroke="#8b5966" /><path d="M8 3h4c3 2 2 8-1 9" stroke="#b06a80" strokeWidth="1.500" /><path d="M2 2.500h5M4.500 3v9.500M2 12.500h8V9" stroke="#f4e02a" strokeWidth="2" /></Svg>
        </span>
        <span className="flex w-6 justify-center">
          <Svg><path d="M6.500 5.500H15v6.500H4.500V9" stroke="#fff" strokeWidth="1.200" /><path d="M8 7h5.500v3.500H7z" fill="#fff" /><path d="M1.500 1.500v2M4.500 1.500v2M.5 3.500h5v2L3 7 .5 5.500zM3 7v5h2" stroke="#fff" /></Svg>
        </span>
        <span className="flex w-6 justify-center">
          <Svg><path d="M2 14C2 7 7 2 14 2M5 14c0-5 4-9 9-9M8 14c0-3 3-6 6-6" stroke="#c5cccd" strokeWidth="1.200" /><path d="M11 14c0-2 1-3 3-3v3z" fill="#fff" /></Svg>
        </span>
        <span className="flex w-[23px] justify-center">
          <Svg><path d="M1 6h2.500L7 3v10l-3.500-3H1z" stroke="#fff" strokeWidth="1.200" /><path d="M9 6c1 1.300 1 2.700 0 4M11 4c2 2.500 2 5.500 0 8M13 2c3 4 3 8 0 12" stroke="#fff" strokeWidth="1.100" /></Svg>
        </span>
        <span className="flex w-8 justify-center">
          <svg width="23" height="14" viewBox="0 0 23 14" fill="none" stroke="#fff" aria-hidden="true">
            <path d="M.5.500h22v13H.500z" /><path d="M3 4h17M3 7h17" strokeDasharray="1 1" /><path d="M3 10.500h2M7 10.500h9M18 10.500h2" />
          </svg>
        </span>
        <span className="w-[25px] text-center text-[20px] leading-6">A</span>
        <span className="flex w-[30px] justify-center">
          <Svg><path d="M1 3l12-2.500L15.500 13 3 15.500z" fill="#f4511e" /><path d="M11.500 5C7 3.500 4.500 5 5 7c1 1.500 6 0 6 2.500 0 2-4 2.500-6.500 1" stroke="#fff" strokeWidth="1.900" /></Svg>
        </span>
        <div className="w-[77px] text-center text-[12px] leading-[18px]">
          <div>11:03</div>
          <div>2018/10/23</div>
        </div>
        <button type="button" aria-label="操作中心" className="relative flex h-10 w-12 items-center pl-3">
          <svg width="18" height="16" viewBox="0 0 18 16" aria-hidden="true">
            <path d="M1 0h16v12h-8l-3 3v-3H1z" fill="#fff" />
            <path d="M3 3.500h12M3 6h12M3 8.500h8" stroke="#04171b" />
          </svg>
          <span className="absolute top-[19px] left-[19px] h-4 w-4 rounded-full border border-[#a8a8a8] bg-[#3d4447] text-[11px] leading-[14px]">7</span>
        </button>
        <span className="mr-1 h-10 w-px bg-[#5a6568]" />
      </div>
    </div>
  );
}

/* ---------- floating input-method bar ---------- */

function ImeBar() {
  return (
    <>
      <div className="absolute top-0 left-[710px] h-4 w-[62px] overflow-hidden text-center text-[12px] text-white">
        <span className="absolute -top-[50px] left-0 h-[62px] w-[62px] rounded-full border-2 border-[#d9d9d9] bg-[#3fc158]" />
        <span className="relative block leading-4">68</span>
      </div>
      <div className="absolute top-2 left-[693px] flex h-6 w-[194px] items-center justify-between border border-[#a9bfdc] bg-white pr-[2px] pl-[18px] text-[#2577c8]">
        <button type="button" aria-label="中英文切换"><Svg><path d="M2 14L7.500 2h1L14 14M4 10h8" stroke="#2577c8" strokeWidth="2.200" /></Svg></button>
        <button type="button" aria-label="标点"><Svg><circle cx="5" cy="6" r="2" fill="#2577c8" /><path d="M10 8.500h2.500c.5 2-.5 4-2.500 4.500" stroke="#2577c8" strokeWidth="1.800" /></Svg></button>
        <button type="button" aria-label="表情"><Svg><circle cx="8" cy="8" r="6.800" stroke="#2577c8" strokeWidth="1.600" /><path d="M5.500 5v2.500M10.500 5v2.500M4.500 9.500c1.500 3 5.500 3 7 0" stroke="#2577c8" strokeWidth="1.500" /></Svg></button>
        <button type="button" aria-label="语音"><Svg><rect x="5.500" y=".5" width="5" height="9" rx="2.500" fill="#2577c8" /><path d="M3 7c0 6 10 6 10 0M8 11.500V15M5 15h6" stroke="#2577c8" strokeWidth="1.500" /></Svg></button>
        <button type="button" aria-label="软键盘"><Svg><rect x=".8" y="2.800" width="14.400" height="10.400" rx="1" stroke="#2577c8" strokeWidth="1.600" /><path d="M3 6h10M3 8.500h10" stroke="#2577c8" strokeWidth="1.500" strokeDasharray="1.500 1" /><path d="M4.500 11h7" stroke="#2577c8" /></Svg></button>
        <button type="button" aria-label="账户"><Svg><circle cx="7" cy="3.500" r="3" fill="#b6c0d4" /><path d="M1 13c0-7 11-8 12-4H5v4z" fill="#b6c0d4" /><path d="M5.500 9.500h4v2.500h-4v2.500h4M15.500 9.500h-4v5h4V12h-2" stroke="#aab5cb" /></Svg></button>
        <button type="button" aria-label="皮肤"><Svg><path d="M5 1.500c1 2 5 2 6 0l4.500 2.500-1.500 3.500-2-.5v8H4V7l-2 .5L.5 4z" fill="#2577c8" /></Svg></button>
        <button type="button" aria-label="工具箱"><Svg><path d="M2.500 13.500L9 7" stroke="#2577c8" strokeWidth="3" strokeLinecap="round" /><path d="M13 1.200C9 0 6.500 3.500 8 6.500c1 2.500 6 2.500 7.200-2L12.500 6 10.500 4z" fill="#2577c8" /></Svg></button>
      </div>
      <svg width="28" height="28" viewBox="0 0 28 28" fill="none" className="absolute top-[5px] left-[681px]" aria-hidden="true">
        <path d="M1 7Q1 5 3 4.500L21 .500q2.500-.5 3 2L27 21q0 2.500-2 3L8 27q-2.500.5-3-2z" fill="#f04e1b" />
        <path d="M21 6.500C12 4 6.500 7 7.500 10.500c1.500 3.500 12 .5 13 4.500.5 4-7 6.500-13.500 3.500" stroke="#fff" strokeWidth="3.400" />
      </svg>
    </>
  );
}

/* ---------- window ---------- */

export default function App() {
  return (
    <div className="relative flex h-screen flex-col overflow-hidden bg-[#f0f0f0] font-['Open_Sans','Noto_Sans_CJK_SC',sans-serif] text-[12px] leading-4 text-black">
      <header className="flex h-[23px] shrink-0 items-center bg-white pl-[2px]">
        <GldIcon />
        <h1 className="ml-[5px] flex-1 whitespace-nowrap">
          广联达BIM钢筋算量软件
          <span className="text-[13px]"> GGJ2013 - [C:\Users\Administrator.PC-20141127NRHM\Desktop\</span>
          白龙村-2018-02-03-20-08
        </h1>
        <div className="flex items-center gap-[35px] pr-5">
          <button type="button" aria-label="最小化"><svg width="10" height="10" viewBox="0 0 10 10" className="block" aria-hidden="true"><path d="M0 4.500h10" stroke="#000" /></svg></button>
          <button type="button" aria-label="还原"><svg width="10" height="10" viewBox="0 0 10 10" fill="none" className="block" aria-hidden="true"><path d="M.5 2.500h7v7h-7zM2.500 2V.500h7v7H8" stroke="#000" /></svg></button>
          <button type="button" aria-label="关闭窗口"><svg width="10" height="10" viewBox="0 0 10 10" fill="none" className="block" aria-hidden="true"><path d="M0 0l10 10M10 0L0 10" stroke="#000" /></svg></button>
        </div>
      </header>

      <div className="flex h-7 shrink-0 justify-end gap-[2px] pt-px pb-1">
        <span className="h-full w-6 bg-linear-to-r from-white to-[#f0f0f0]" />
        <Panel className="pr-[6px] pl-[5px]">
          <button type="button" className="flex items-center">
            <Svg><rect width="16" height="16" rx="2" fill="#3f9ccf" /><circle cx="8" cy="6" r="2.800" fill="#fff" /><path d="M3 13V9.500h3l2 1.500 2-1.500h3V13z" fill="#fff" /></Svg>
            <span className="mr-[7px] ml-[5px]">13907298339</span>
            <Caret />
          </button>
          <span className="mr-2 ml-[9px]">造价豆:0</span>
          <button type="button" aria-label="通知">
            <Svg><path d="M8 0C4 0 4 4 4 7l-2.500 4h13L12 7c0-3 0-7-4-7z" fill="#2b8cf0" /><path d="M5.500 12.500h5L8 15.500z" fill="#2b8cf0" /></Svg>
          </button>
          <button type="button" className="ml-[6px] flex items-center gap-[5px]">
            <Svg><path d="M.7 1.700h14.600v10h-4v3.500l-3.500-3.500H.700z" fill="#fff" stroke="#2b7fe0" strokeWidth="1.300" /><path d="M3.500 6.500h9" stroke="#2b7fe0" strokeWidth="1.500" strokeDasharray="2 1" /></Svg>
            我要建议
          </button>
        </Panel>
      </div>

      <MainToolbar />

      <div className="flex min-h-0 flex-1">
        <Sidebar />
        <main className="flex min-w-0 flex-1 flex-col pr-px pl-[5px]">
          <EditToolbars />
          <Canvas />
          <SnapBar />
        </main>
      </div>

      <StatusBar />
      <Taskbar />
      <ImeBar />
    </div>
  );
}
